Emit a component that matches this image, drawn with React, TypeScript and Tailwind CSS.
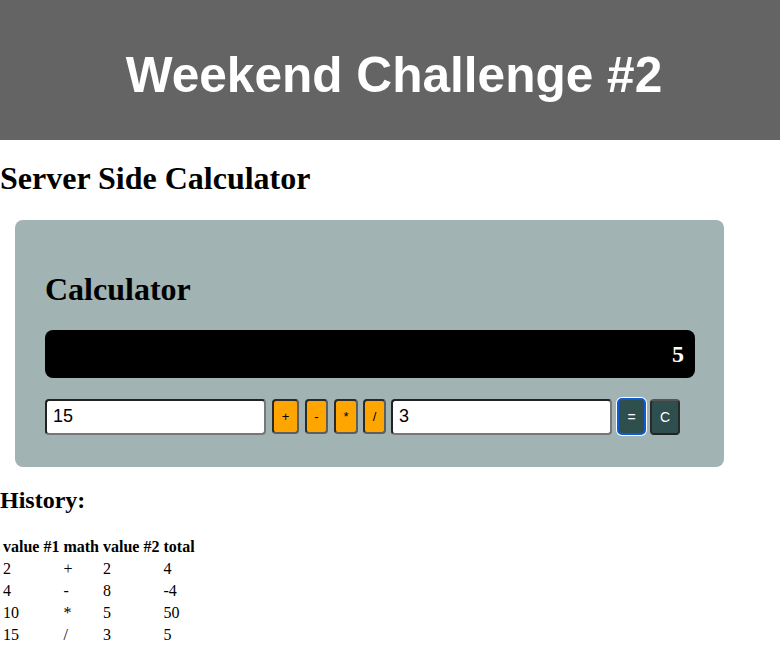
const serif = "font-['Liberation_Serif','Times_New_Roman',serif]";
const sans = "font-['Liberation_Sans',Arial,sans-serif]";

type HistoryRow = {
  a: string;
  op: string;
  b: string;
  total: string;
};

const history: HistoryRow[] = [
  { a: "2", op: "+", b: "2", total: "4" },
  { a: "4", op: "-", b: "8", total: "-4" },
  { a: "10", op: "*", b: "5", total: "50" },
  { a: "15", op: "/", b: "3", total: "5" },
];

function OpButton({ label, className }: { label: string; className: string }) {
  return (
    <button
      className={`${sans} flex h-[35px] items-center justify-center rounded-[4px] border-2 border-t-[#2a2a2a] border-l-[#2a2a2a] border-r-[#5e5e5e] border-b-[#5e5e5e] bg-[#ffa500] px-[8px] text-[13px] leading-none text-black ${className}`}
      type="button"
    >
      {label}
    </button>
  );
}

export default function App() {
  return (
    <div className={`${serif} min-h-[660px] bg-white text-black`}>
      <header className="flex h-[140px] justify-center bg-[#646464] pl-[8px] pt-[46px]">
        <h1 className={`${sans} text-[49.6px] font-bold leading-[normal] text-white`}>
          Weekend Challenge #2
        </h1>
      </header>

      <h1 className="mt-[20px] text-[32px] font-bold leading-[normal]">
        Server Side Calculator
      </h1>

      <section className="mx-[15px] mt-[23px] w-[709px] rounded-[8px] bg-[#a1b3b2] px-[30px] pb-[32px] pt-[51px]">
        <h2 className="text-[32px] font-bold leading-[normal]">Calculator</h2>

        <div className="mt-[22px] flex h-[48px] w-[650px] items-center justify-end rounded-[8px] bg-black pr-[11px]">
          <span className="text-[24px] font-bold leading-[normal] text-white">5</span>
        </div>

        <div className="mt-[20px] flex items-center">
          <input
            className={`${sans} h-[36px] w-[221px] rounded-[4px] border-2 border-t-[#222] border-l-[#222] border-r-[#777] border-b-[#777] bg-white pl-[6px] text-[18px] text-black outline-none`}
            defaultValue="15"
            readOnly
          />
          <OpButton className="ml-[6px] w-[27px]" label="+" />
          <OpButton className="ml-[6px] w-[23px]" label="-" />
          <OpButton className="ml-[6px] w-[24px]" label="*" />
          <OpButton className="ml-[5px] w-[23px]" label="/" />
          <input
            className={`${sans} ml-[5px] h-[36px] w-[221px] rounded-[4px] border-2 border-t-[#222] border-l-[#222] border-r-[#777] border-b-[#777] bg-white pl-[6px] text-[18px] text-black outline-none`}
            defaultValue="3"
            readOnly
          />
          <button
            className={`${sans} ml-[5px] flex h-[37px] w-[29px] items-center justify-center rounded-[5px] border-2 border-[#0f5bd3] bg-[#2f4f4f] text-[14px] leading-none text-white shadow-[0_0_0_1px_#ffffff]`}
            type="button"
          >
            =
          </button>
          <button
            className={`${sans} ml-[4px] flex h-[36px] w-[30px] items-center justify-center rounded-[4px] border-2 border-t-[#555] border-l-[#2a2a2a] border-r-[#2a2a2a] border-b-[#222] bg-[#2f4f4f] text-[14px] leading-none text-white`}
            type="button"
          >
            C
          </button>
        </div>
      </section>

      <h2 className="mt-[20px] text-[24px] font-bold leading-[normal]">History:</h2>

      <table className="mt-[21px] border-separate border-spacing-[2px] text-[16px] leading-[normal]">
        <thead>
          <tr>
            <th className="p-[1px] text-left font-bold">value #1</th>
            <th className="p-[1px] text-left font-bold">math</th>
            <th className="p-[1px] text-left font-bold">value #2</th>
            <th className="p-[1px] text-left font-bold">total</th>
          </tr>
        </thead>
        <tbody>
          {history.map((row) => (
            <tr key={row.a + row.op}>
              <td className="p-[1px]">{row.a}</td>
              <td className="p-[1px]">{row.op}</td>
              <td className="p-[1px]">{row.b}</td>
              <td className="p-[1px]">{row.total}</td>
            </tr>
          ))}
        </tbody>
      </table>
    </div>
  );
}
